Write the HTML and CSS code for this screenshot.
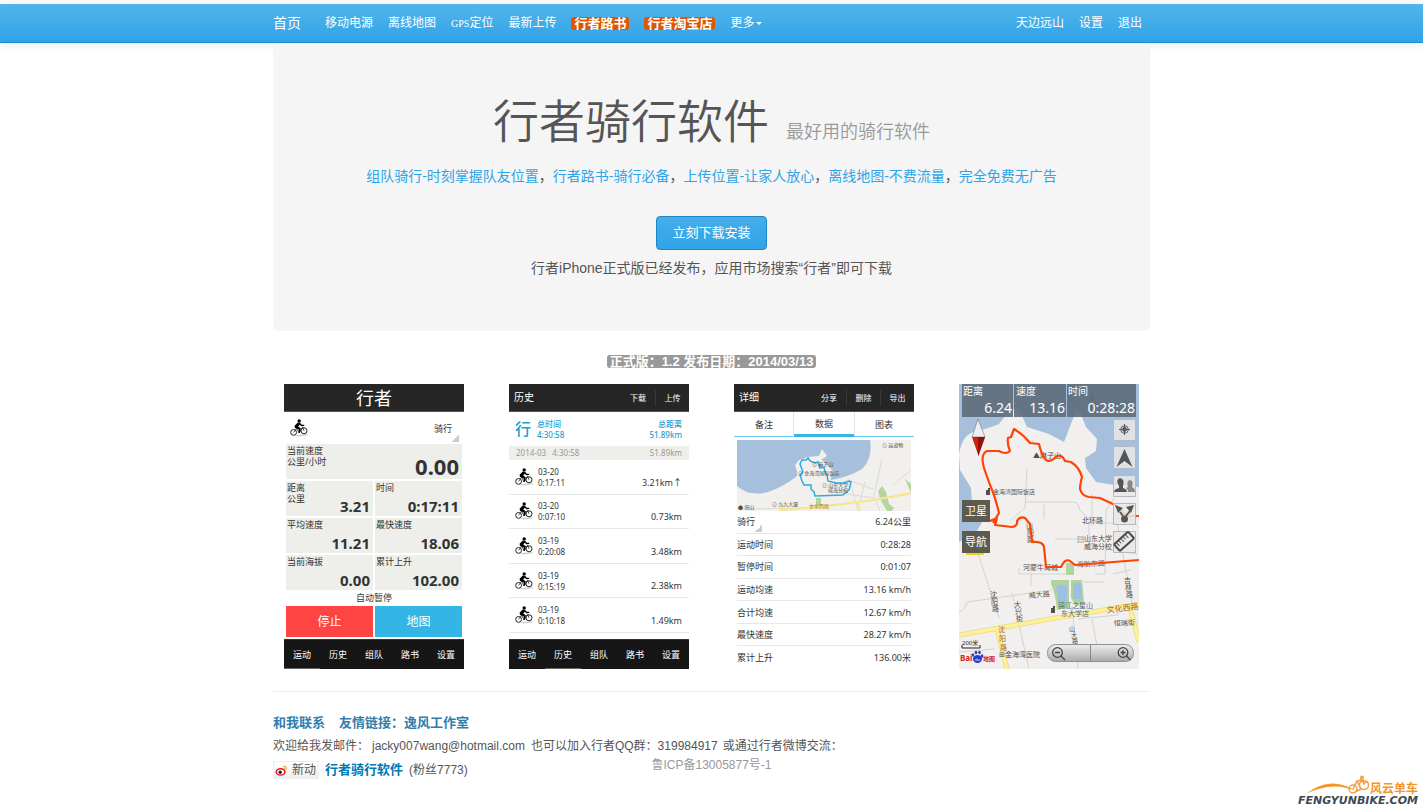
FILE: index.html
```html
<!DOCTYPE html>
<html lang="zh-CN">
<head>
<meta charset="utf-8">
<meta name="viewport" content="width=device-width, initial-scale=1">
<title>行者骑行软件</title>
<link rel="stylesheet" href="styles.css">
</head>
<body>
<svg class="sprite" aria-hidden="true">
  <symbol id="rider" viewBox="0 0 18 18">
    <path d="M5 16.5 17 15l.8 1.2L8 17.6z" fill="#ccc"/>
    <circle cx="3.6" cy="13.4" r="2.9" fill="none" stroke="#222" stroke-width="1"/>
    <circle cx="14" cy="11.8" r="3" fill="none" stroke="#222" stroke-width="1"/>
    <circle cx="9.2" cy="1.9" r="1.7"/>
    <path d="M7.8 3.6 4.6 6.8l.4 2.2 3.8 1.4-.4 3.6h1.6l.8-4.8-2.6-1.8 1.6-1.6 1.6 1.4 2.8-.2V5.800l-2.400-.1-1.800-2z"/>
    <path d="m3.6 13.4 3-4 2.6 4.4 3.4-5.6 1.4 3.6" fill="none" stroke="#222" stroke-width=".8"/>
  </symbol>
</svg>
<header class="navbar">
  <nav class="container navbar-inner">
    <a class="brand" href="#">首页</a>
    <a href="#">移动电源</a>
    <a href="#">离线地图</a>
    <a href="#"><span class="latin">GPS</span>定位</a>
    <a href="#">最新上传</a>
    <a href="#"><span class="label hot">行者路书</span></a>
    <a href="#"><span class="label hot">行者淘宝店</span></a>
    <a href="#">更多<span class="caret"></span></a>
    <a class="first-right" href="#">天边远山</a>
    <a href="#">设置</a>
    <a href="#">退出</a>
  </nav>
</header>
<main class="container">
  <section class="hero">
    <h1>行者骑行软件 <small>最好用的骑行软件</small></h1>
    <p class="features"><a href="#">组队骑行-时刻掌握队友位置</a>，<a href="#">行者路书-骑行必备</a>，<a href="#">上传位置-让家人放心</a>，<a href="#">离线地图-不费流量</a>，<a href="#">完全免费无广告</a></p>
    <button class="download" type="button">立刻下载安装</button>
    <p class="notice">行者iPhone正式版已经发布，应用市场搜索“行者”即可下载</p>
  </section>
  <p class="version"><span class="label">正式版：1.2 发布日期：2014/03/13</span></p>

  <section class="shots">
    <article class="phone">
      <header class="bar bar-center">行者</header>
      <div class="mode"><svg class="rider"><use href="#rider"/></svg><span class="spinner">骑行</span></div>
      <div class="gauges">
        <div class="gauge wide"><span>当前速度<br>公里/小时</span><b>0.00</b></div>
        <div class="gauge"><span>距离<br>公里</span><b>3.21</b></div>
        <div class="gauge"><span>时间</span><b>0:17:11</b></div>
        <div class="gauge"><span>平均速度</span><b>11.21</b></div>
        <div class="gauge"><span>最快速度</span><b>18.06</b></div>
        <div class="gauge"><span>当前海拔</span><b>0.00</b></div>
        <div class="gauge"><span>累计上升</span><b>102.00</b></div>
      </div>
      <p class="pause">自动暂停</p>
      <div class="actions"><button class="stop" type="button">停止</button><button class="map-button" type="button">地图</button></div>
      <nav class="tabbar"><button class="on">运动</button><button>历史</button><button>组队</button><button>路书</button><button>设置</button></nav>
    </article>

    <article class="phone">
      <header class="bar"><span class="title">历史</span><button>下载</button><button>上传</button></header>
      <div class="total"><span class="glyph">行</span><span>总时间<br>4:30:58</span><span class="end">总距离<br>51.89km</span></div>
      <div class="month"><span>2014-03 &nbsp; 4:30:58</span><span>51.89km</span></div>
      <ul class="rides">
        <li><svg class="rider"><use href="#rider"/></svg><span>03-20<br>0:17:11</span><span class="km">3.21km↑</span></li>
        <li><svg class="rider"><use href="#rider"/></svg><span>03-20<br>0:07:10</span><span class="km">0.73km</span></li>
        <li><svg class="rider"><use href="#rider"/></svg><span>03-19<br>0:20:08</span><span class="km">3.48km</span></li>
        <li><svg class="rider"><use href="#rider"/></svg><span>03-19<br>0:15:19</span><span class="km">2.38km</span></li>
        <li><svg class="rider"><use href="#rider"/></svg><span>03-19<br>0:10:18</span><span class="km">1.49km</span></li>
      </ul>
      <nav class="tabbar"><button>运动</button><button class="on">历史</button><button>组队</button><button>路书</button><button>设置</button></nav>
    </article>

    <article class="phone">
      <header class="bar"><span class="title">详细</span><button>分享</button><button>删除</button><button>导出</button></header>
      <nav class="tabs"><button>备注</button><button class="on">数据</button><button>图表</button></nav>
      <svg class="minimap" viewBox="0 0 174 71">
        <rect width="174" height="71" fill="#f2f0ec"/>
        <path d="M0 0H133Q136 18 125 29 112 37 94 40L84 20 90 16 85 9 82 16 70 17 62 22 60 36Q48 46 31 52 12 57 0 46Z" fill="#a5bfdd"/>
        <path d="M58 25 62 20 72 17 85 20 96 31 92 44 64 44z" fill="#f2f0ec"/>
        <path d="M141 51l4-5 4 6 3 12 5 4-2 3h-5l-7-12zM168 39l6 5v9zM79 58h5v8h-5z" fill="#b4d69c"/>
        <path d="M0 69 66 68 137 60 174 54M112 38 121 71M96 52 137 58M145 19l-8 37 6 15M94 47l17-7 25 9M156 45l18-15M128 42l-5 20" fill="none" stroke="#dcdad5"/>
        <path d="M42 70 82 67 137 60 174 53M42 70l5-6M121 63l2 8" fill="none" stroke="#f7e78c" stroke-width="2"/>
        <path d="m63 24 2-4h4l2-2 2 3 5 2 3-1 2 6 4-1 1 5 2 3 1 6 8 2h8l5-2 2 1-2 8-4 3-2 2-28 1-1-4-3-3v-4h-7l-2-4-2-6 3-3z" fill="none" stroke="#2fa9e4" stroke-width="1.5"/>
        <g font-size="5" fill="#4f4945"><text x="75" y="26">⊙ 麻子山</text><text x="61" y="35">⊙ 金海湾国际饭店</text><text x="85" y="47">⊙ 山东大学</text><text x="91" y="52">威海分校</text><text x="145" y="7">⊙ 运道物</text><text x="35" y="66">⊙ 九九大厦</text><text x="1" y="69">● 塔山</text><text x="72" y="68" fill="#a47a20">文化西路</text></g>
      </svg>
      <table class="stats">
        <tr><th scope="row"><span class="spinner">骑行</span></th><td>6.24公里</td></tr>
        <tr><th scope="row">运动时间</th><td>0:28:28</td></tr>
        <tr><th scope="row">暂停时间</th><td>0:01:07</td></tr>
        <tr><th scope="row">运动均速</th><td>13.16 km/h</td></tr>
        <tr><th scope="row">合计均速</th><td>12.67 km/h</td></tr>
        <tr><th scope="row">最快速度</th><td>28.27 km/h</td></tr>
        <tr><th scope="row">累计上升</th><td>136.00米</td></tr>
      </table>
    </article>

    <svg class="phone map" viewBox="0 0 180 285" role="img" aria-label="骑行地图">
      <defs><linearGradient id="zoomfill" x2="0" y2="1"><stop stop-color="#eee"/><stop offset="1" stop-color="#aaa"/></linearGradient></defs>
      <rect width="180" height="285" fill="#a5bfdd"/>
      <path d="M0 70Q3 52 14 48 31 44 40 40L51 26 60 25 68 43 90 50 105 58 117 27 121 28 127 43 138 55 137 67 126 74 127 84 137 98 155 101 180 103V285H0V158L17 149 23 138 13 120 12 104 1 86Z" fill="#f2f0ee"/>
      <path d="M132 8q6 3 3 9l-5-1z" fill="#8e8c88"/>
      <path d="M107 179h8v12h-8zM92 196h18v28l-12 2q-2-18-6-26zM112 196h11l2 22-8 5-5-9z" fill="#b0d49b"/>
      <path d="M97 202q5-3 11 0v16h-9zM114 200q5-3 8 0l1 15h-9z" fill="#9fbfe0"/>
      <g fill="none" stroke="#d5d3cf">
        <path d="M68 84 66 124 52 136M66 118h48q6 0 6 7l12 12M16 160l24 74M0 228q6-2 8-10l85-12M60 184v6h47M72 202v-12M136 190h10l1-63 8-13M96 155h34v-16h28M53 209l17 76M113 222l6 63M157 132l9 50 8 42M133 110v32M154 190l18-4M85 120v15M0 268l36-3M119 235l40-4v-8M146 165l32 5M124 198h21M168 130l12 14M133 235l5 27"/>
      </g>
      <path d="M0 251 91 235 180 220M38 245 48 285M171 224 180 258" fill="none" stroke="#eadb87" stroke-width="5"/>
      <path d="M0 251 91 235 180 220M38 245 48 285M171 224 180 258" fill="none" stroke="#fdf09a" stroke-width="3.5"/>
      <path d="M27 111v-5h2v-2h2v7zM92 229v-5h2v-2h2v7z" fill="#554f4a"/>
      <g font-size="7" fill="#554f4a">
        <text x="74" y="74">▲麻子山</text><text x="34" y="110" font-size="6">金海湾国际饭店</text><text x="123" y="139">北环路</text>
        <text x="118" y="158">▤</text><text x="125" y="157">山东大学</text><text x="125" y="165">威海分校</text>
        <text x="64" y="186">河蒙牛局城</text><text x="118" y="183" transform="rotate(-3 118 183)">海防东路</text>
        <text x="70" y="214" transform="rotate(-4 70 214)">威大路</text><text x="99" y="224" fill="#526a88">锦江之星山</text><text x="102" y="232" fill="#526a88">东大学店</text>
        <text x="155" y="242" transform="rotate(-3 155 242)">恒瑞街</text><text x="40" y="273">⊞金海湾医院</text>
        <text y="213"><tspan x="31">沈</tspan><tspan x="32" dy="7">阳</tspan><tspan x="33" dy="7">路</tspan></text>
        <text y="223"><tspan x="55">大</tspan><tspan x="56" dy="7">兴</tspan><tspan x="57" dy="7">街</tspan></text>
        <text y="247" font-size="6"><tspan x="110">山</tspan><tspan x="112" dy="6">大</tspan><tspan x="113" dy="6">路</tspan></text>
        <text y="199"><tspan x="165">吉</tspan><tspan x="166" dy="7">林</tspan><tspan x="167" dy="7">路</tspan></text>
        <text y="144"><tspan x="67">山</tspan><tspan x="68" dy="7">阳</tspan><tspan x="68" dy="7">路</tspan></text>
      </g>
      <g fill="#a06c18"><text font-size="8" x="148" y="229" transform="rotate(-7 148 229)">文化西路</text><text font-size="7" y="248"><tspan x="39">沈</tspan><tspan x="40" dy="9">阳</tspan><tspan x="41" dy="9">路</tspan></text></g>
      <path d="M34 139 40 129Q36 112 31 101L25 84Q21 70 28 67L40 67Q47 71 51 67 48 60 49 54L52 53 55 45Q65 51 71 59L80 60Q82 70 87 76 91 79 98 72 103 70 106 77L112 78Q120 83 123 93 121 101 121 105 123 112 130 113L141 114 156 121 168 132H180M31 137 38 134 36 141 53 143Q59 142 58 137 61 132 66 134L71 140 73 158Q84 157 85 163L87 183 102 183Q106 174 111 177L116 181 180 176" fill="none" stroke="#ff4205" stroke-width="2.2" stroke-linejoin="round"/>
      <g fill="#5d6b7a" fill-opacity=".9"><path d="M3 0h51v33H3zM55 0h52v33H55zM108 0h69v33h-69z"/></g>
      <g fill="#fff"><g font-size="10"><text x="4" y="11">距离</text><text x="57" y="11">速度</text><text x="109" y="11">时间</text></g>
      <g font-size="14" text-anchor="end"><text x="53" y="29">6.24</text><text x="106" y="29">13.16</text><text x="176" y="29">0:28:28</text></g></g>
      <path d="m19 35-6 18h13z" fill="#eee" stroke="#777" stroke-width=".6"/><path d="m13 53 6.5 19L26 53z" fill="#d0200c"/><path d="M19 53v19l7-19z" fill="#8f1308"/>
      <g fill="#e7e7e5" fill-opacity=".85" stroke="#b4bac1"><path d="M154.5 35.5h22v21h-22zM154.5 62.5h22v22h-22zM154.5 91.5h22v21h-22zM154.5 119.500h22v21h-22zM154.5 147.5h22v21h-22z"/></g>
      <g fill="#555"><circle cx="165.5" cy="45.5" r="3.8" fill="none" stroke="#666"/><circle cx="165.5" cy="45.5" r="2.4"/><path d="M165 40h1v3h-1zM165 48h1v3h-1zM160 45h3v1h-3zM168 45h3v1h-3zM165.5 65l8 18-8-6-8 6z"/>
      <path d="M155 108q0-3 5-4v-2q-4-6 1-8 5 1 3 8v2q4 1 4 4z"/><path d="M169 108q0-3-2-4l2-1q-2-6 2-7 4 1 2 7 3 1 3 5z" fill="#888"/>
      <circle cx="165.5" cy="135" r="3.5"/><path d="m164 132-3-4M167 132l4-5" stroke="#555" stroke-width="2"/><path d="m156 121 8 3-5 5zM175 121l-8 2 5 6z"/></g>
      <g transform="rotate(-42 165 158)" fill="none" stroke="#4a4a4a"><rect x="156" y="153" width="19" height="9" rx="1" stroke-width="2"/><path d="M159 154v4M162 154v3M165 154v4M168 154v3M171 154v4"/></g>
      <path d="M7 167h18v4H7z" fill="#e9cf30"/><path d="M3 116h28v22H3zM3 147h28v22H3z" fill="#5c5b4d"/>
      <g fill="#fff" font-size="11"><text x="6" y="131">卫星</text><text x="6" y="162">导航</text></g>
      <text x="3" y="261" font-size="6" fill="#222">200米</text><path d="M3 261v3h18v-3" fill="none" stroke="#222"/>
      <text x="1" y="277" font-size="8" font-weight="700" fill="#d8231c">Bai</text><g fill="#2a38c8"><ellipse cx="18.5" cy="275" rx="4.5" ry="4"/><ellipse cx="14" cy="271" rx="1.3" ry="1.8"/><ellipse cx="17" cy="268.5" rx="1.3" ry="1.8"/><ellipse cx="20.5" cy="268.5" rx="1.3" ry="1.8"/><ellipse cx="23" cy="272" rx="1.3" ry="1.8"/></g><text x="16" y="277" font-size="4" fill="#fff">du</text><text x="24" y="277" font-size="6" font-weight="700" fill="#d8231c">地图</text>
      <rect x="88.5" y="260.5" width="86" height="17" rx="8" fill="url(#zoomfill)" stroke="#909090"/><path d="M131.5 261v16" stroke="#888"/>
      <g fill="none" stroke="#444" stroke-width="1.3"><circle cx="98.5" cy="268.5" r="4.8"/><path d="m102 272 4 4M96 268.5h5"/><circle cx="164" cy="268.5" r="4.8"/><path d="m167.5 272 4 4M161.5 268.5h5M164 266v5"/></g>
    </svg>
  </section>

  <footer class="footer">
    <h2><a href="#">和我联系</a><a href="#">友情链接：逸风工作室</a></h2>
    <p class="contact"><span>欢迎给我发邮件：</span><span class="email">jacky007wang@hotmail.com</span><span>也可以加入行者QQ群：</span><span class="number">319984917</span><span>或通过行者微博交流：</span></p>
    <div class="bottom">
      <div class="weibo">
        <a class="weibo-tag" href="#"><svg viewBox="0 0 14 14"><ellipse cx="6" cy="8.5" rx="5.5" ry="4.2" fill="#e6162d"/><ellipse cx="6" cy="8.7" rx="3.8" ry="2.7" fill="#fff"/><circle cx="5.6" cy="8.9" r="1.8" fill="#222"/><path d="M9 2.5q3.5-.5 3 3.5M9 4.5q1.6-.3 1.3 1.5" fill="none" stroke="#f5a52c" stroke-width="1.3"/></svg>新动</a>
        <a class="weibo-name" href="#">行者骑行软件</a><span>(粉丝7773)</span>
      </div>
      <span class="icp">鲁ICP备13005877号-1</span>
    </div>
  </footer>
</main>
<svg class="watermark" viewBox="0 0 124 32" role="img" aria-label="风云单车">
  <path d="M8 19Q32-1 60 17 35 5 8 19z" fill="#f5962a"/>
  <g fill="none" stroke="#f0a04c" stroke-width="1.5"><circle cx="55" cy="14" r="4"/><circle cx="66" cy="10" r="4.5"/><path d="m55 14 4-8 6-1 1 5M59 6l4 8-6 3M62 4l4 4 4-1"/></g><circle cx="64" cy="2.5" r="2" fill="#f0a04c"/>
  <text class="watermark-name" x="72" y="18">风云单车</text>
  <text class="watermark-url" x="0" y="29">FENGYUNBIKE.COM</text>
</svg>
</body>
</html>
```
FILE: styles.css
```css
* { box-sizing: border-box; }
body {
  position: relative;
  min-height: 100vh;
  margin: 0;
  padding-top: 4px;
  background: #fff;
  color: #555;
  font: 14px/20px "Liberation Sans", "Noto Sans CJK SC", sans-serif;
}
a { color: #2fa4e7; text-decoration: none; }
p, h1, h2, ul { margin: 0; padding: 0; }
button { margin: 0; padding: 0; border: 0; background: none; color: inherit; font: inherit; }
.sprite { position: absolute; width: 0; height: 0; }
.container { width: 100%; max-width: 877px; margin: 0 auto; }

.navbar {
  border-bottom: 1px solid #1990d5;
  background: linear-gradient(#54b4eb, #2fa4e7);
  box-shadow: 0 1px 10px rgba(0, 0, 0, .1);
}
.navbar-inner { display: flex; align-items: center; gap: 15px; height: 38px; padding-right: 8px; font-size: 12px; }
.navbar-inner a { color: #fff; white-space: nowrap; }
.navbar-inner .brand { margin-right: 9px; font-size: 14px; }
.navbar-inner .first-right { margin-left: auto; }
.latin { font-family: "Liberation Serif", serif; font-size: 10px; }
.label {
  display: inline-block;
  padding: 0 3px;
  border-radius: 3px;
  background: #999;
  color: #fff;
  font-size: 13px;
  font-weight: 700;
  line-height: 13px;
  vertical-align: top;
}
.hot { background: #dd5600; }
.navbar .hot { display: block; }
.caret {
  display: inline-block;
  margin-left: 2px;
  border: 3px solid transparent;
  border-top-color: #fff;
  border-bottom: 0;
  vertical-align: middle;
}

.hero { padding: 49px 20px 53px; border-radius: 6px; background: #f5f5f5; text-align: center; }
.hero h1 { font-size: 46px; font-weight: 350; line-height: 60px; }
.hero small { margin-left: 4px; color: #999; font-size: 18px; font-weight: 350; line-height: 20px; }
.features { margin-top: 14px; }
.download {
  height: 34px;
  margin-top: 30px;
  padding: 0 15px;
  border: 1px solid #1b86c8;
  border-radius: 4px;
  background: linear-gradient(#46aeea, #2fa4e7);
  color: #fff;
  font-size: 13px;
}
.notice { margin-top: 8px; }
.version { height: 14px; margin: 24px 0 15px; line-height: 14px; text-align: center; }

.shots { display: flex; flex-wrap: wrap; justify-content: space-between; gap: 22px; padding: 0 11px; }
.phone {
  display: flex;
  flex-direction: column;
  width: 180px;
  height: 285px;
  background: #fff;
  color: #333;
  font: 9px/11px "Noto Sans", "Noto Sans CJK SC", sans-serif;
}
.bar { display: flex; align-items: center; height: 28px; padding-left: 5px; border-bottom: 1px solid #555; background: #262626; color: #fff; font-size: 8px; }
.bar-center { justify-content: center; padding: 0; font-size: 18px; line-height: 26px; }
.bar .title { margin-right: auto; font-size: 10px; }
.bar button { width: 34px; border-left: 1px solid #383838; line-height: 16px; }
.bar .title + button { border-left: 0; }
.mode { display: flex; align-items: center; justify-content: space-between; height: 32px; padding: 0 5px 0 6px; }
.rider { width: 18px; height: 18px; }
.spinner { padding: 8px 7px 8px 0; background: linear-gradient(135deg, transparent 50%, #ccc 50%) right bottom / 7px 7px no-repeat; }
.gauges { display: grid; grid-template-columns: 1fr 1fr; grid-auto-rows: 35px; gap: 2px; margin: 0 2px; }
.gauge { display: flex; justify-content: space-between; padding: 1px 3px 0 1px; background: #eeefea; }
.gauge span { white-space: nowrap; }
.gauge b { align-self: flex-end; margin-left: -40px; font-size: 15px; line-height: 19px; }
.gauge.wide { grid-column: 1 / -1; }
.gauge.wide b { font-size: 22px; line-height: 26px; }
.pause { height: 16px; line-height: 16px; text-align: center; }
.actions { display: grid; grid-template-columns: 1fr 1fr; gap: 2px; height: 31px; margin: 0 2px; color: #fff; font-size: 12px; }
.stop { background: #f44; }
.map-button { background: #33b5e5; }
.tabbar { display: grid; grid-template-columns: repeat(5, 1fr); height: 30px; margin-top: auto; border-top: 1px solid #333; background: #161616; color: #fff; }
.tabbar .on { border-bottom: 1px solid #666; }
.total { display: flex; align-items: center; gap: 6px; height: 34px; padding: 0 7px 0 6px; color: #1b9fd0; font-size: 8px; font-weight: 500; }
.total .glyph { font-size: 16px; }
.end { margin-left: auto; text-align: right; }
.month { display: flex; justify-content: space-between; padding: 0 7px; background: #eeefea; color: #999; font-size: 8px; line-height: 14px; }
.rides { display: grid; grid-auto-rows: 1fr; height: 173px; list-style: none; font-size: 8px; }
.rides li { display: flex; align-items: center; gap: 5px; padding: 0 7px 0 6px; border-bottom: 1px solid #e8e8e8; }
.rides .km { align-self: flex-end; margin: 0 0 6px auto; font-size: 9px; }
.tabs { display: grid; grid-template-columns: repeat(3, 1fr); height: 25px; }
.tabs button { border-bottom: 1px solid #6cc9ee; }
.tabs .on { border-bottom: 3px solid #33b5e5; box-shadow: -1px 0 #e4e4e4, 1px 0 #e4e4e4; }
.minimap { width: 174px; height: 71px; margin: 3px 3px 0; }
.stats { flex: 1; margin: 0 3px; border-spacing: 0; table-layout: fixed; }
.stats tbody { display: grid; grid-auto-rows: 1fr; height: 158px; }
.stats tr { display: flex; align-items: center; justify-content: space-between; border-bottom: 1px solid #e8e8e8; }
.stats tr:last-child { border-bottom: 0; }
.stats th, .stats td { padding: 0; font-weight: 400; }
.stats .spinner { display: block; padding-top: 5px; padding-bottom: 5px; }

.footer { margin-top: 22px; padding-top: 21px; border-top: 1px solid #eee; font-size: 12px; }
.footer h2 { display: flex; gap: 14px; font-size: 13px; line-height: 20px; }
.footer h2 a { color: #317eac; }
.contact { display: flex; flex-wrap: wrap; margin-top: 2px; line-height: 22px; }
.email { margin: 0 6px 0 3px; }
.number { margin-right: 5px; }
.bottom { display: grid; grid-template-columns: 1fr auto 1fr; align-items: start; }
.weibo { display: flex; align-items: center; gap: 6px; padding-top: 3px; }
.weibo-tag { display: flex; align-items: center; gap: 4px; height: 18px; padding: 0 2px 0 1px; border: 1px solid #eee; background: linear-gradient(#fff, #eee); color: #555; }
.weibo-tag svg { width: 13px; height: 13px; }
.weibo-name { color: #0078b6; font-size: 13px; font-weight: 700; }
.icp { color: #999; line-height: 16px; }
.watermark { position: absolute; right: 1px; bottom: 2px; width: 124px; height: 32px; }
.watermark-name { fill: #f5962a; font: 700 12px "Noto Sans CJK SC", sans-serif; }
.watermark-url { fill: #3d4854; font: italic 700 11px "DejaVu Sans", sans-serif; }
```
